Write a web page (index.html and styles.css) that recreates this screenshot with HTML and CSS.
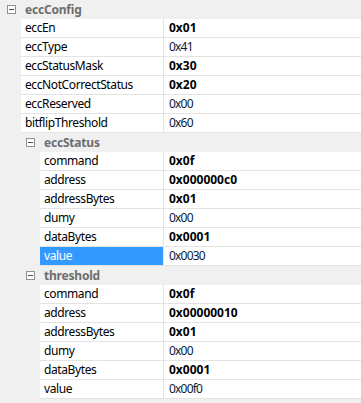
FILE: index.html
```html
<!DOCTYPE html>
<html lang="en">
<head>
  <meta charset="UTF-8">
  <title>Property Grid</title>
  <link rel="stylesheet" href="styles.css">
</head>
<body>
  <div class="grid">
    <div class="group">
      <div class="group-head"><span class="toggle"></span><span class="group-title">eccConfig</span></div>
      <div class="rows">
        <div class="row"><div class="name">eccEn</div><div class="value bold">0x01</div></div>
        <div class="row"><div class="name">eccType</div><div class="value">0x41</div></div>
        <div class="row"><div class="name">eccStatusMask</div><div class="value bold">0x30</div></div>
        <div class="row"><div class="name">eccNotCorrectStatus</div><div class="value bold">0x20</div></div>
        <div class="row"><div class="name">eccReserved</div><div class="value">0x00</div></div>
        <div class="row"><div class="name">bitflipThreshold</div><div class="value">0x60</div></div>
      </div>

      <div class="group nested">
        <div class="group-head"><span class="toggle"></span><span class="group-title">eccStatus</span></div>
        <div class="rows">
          <div class="row"><div class="name">command</div><div class="value bold">0x0f</div></div>
          <div class="row"><div class="name">address</div><div class="value bold">0x000000c0</div></div>
          <div class="row"><div class="name">addressBytes</div><div class="value bold">0x01</div></div>
          <div class="row"><div class="name">dumy</div><div class="value">0x00</div></div>
          <div class="row"><div class="name">dataBytes</div><div class="value bold">0x0001</div></div>
          <div class="row selected"><div class="name">value</div><div class="value">0x0030</div></div>
        </div>
      </div>

      <div class="group nested">
        <div class="group-head"><span class="toggle"></span><span class="group-title">threshold</span></div>
        <div class="rows">
          <div class="row"><div class="name">command</div><div class="value bold">0x0f</div></div>
          <div class="row"><div class="name">address</div><div class="value bold">0x00000010</div></div>
          <div class="row"><div class="name">addressBytes</div><div class="value bold">0x01</div></div>
          <div class="row"><div class="name">dumy</div><div class="value">0x00</div></div>
          <div class="row"><div class="name">dataBytes</div><div class="value bold">0x0001</div></div>
          <div class="row"><div class="name">value</div><div class="value">0x00f0</div></div>
        </div>
      </div>
    </div>
  </div>
</body>
</html>
```

FILE: styles.css
```css
body {
  margin: 0;
  background-color: #f0f0f0;
  font-family: "Noto Sans", "Open Sans", sans-serif;
  font-size: 12px;
  color: #000;
}

.grid {
  width: 361px;
  height: 403px;
  overflow: hidden;
}

.group-head {
  display: flex;
  align-items: center;
  height: 19px;
}

.toggle {
  position: relative;
  box-sizing: border-box;
  width: 9px;
  height: 9px;
  margin-left: 7px;
  margin-right: 9px;
  border: 1px solid #919191;
  background: #fff;
}

/* minus sign */
.toggle::after {
  content: "";
  position: absolute;
  left: 1px;
  top: 3px;
  width: 5px;
  height: 1px;
  background: #4d4d4d;
}

.group-title {
  font-weight: bold;
  color: #6d6d6d;
  letter-spacing: -0.2px;
}

.nested {
  margin-left: 19px;
}

.rows {
  margin-left: 21px;
  background: #fff;
}

.row {
  display: flex;
  height: 19px;
  box-sizing: border-box;
  border-bottom: 1px solid #e3e3e3;
}

.name {
  width: 143px;
  flex: none;
  box-sizing: border-box;
  padding-left: 4px;
  border-right: 1px solid #e3e3e3;
  line-height: 18px;
  letter-spacing: -0.4px;
  white-space: nowrap;
  overflow: hidden;
}

.nested .name {
  width: 124px;
}

.value {
  flex: 1;
  padding-left: 5px;
  line-height: 18px;
  letter-spacing: -0.8px;
  color: #0c1a33;
  white-space: nowrap;
}

.bold {
  font-weight: bold;
  letter-spacing: 0;
  color: #000;
}

.selected .name {
  background: #3399ff;
  color: #fff;
}
```
